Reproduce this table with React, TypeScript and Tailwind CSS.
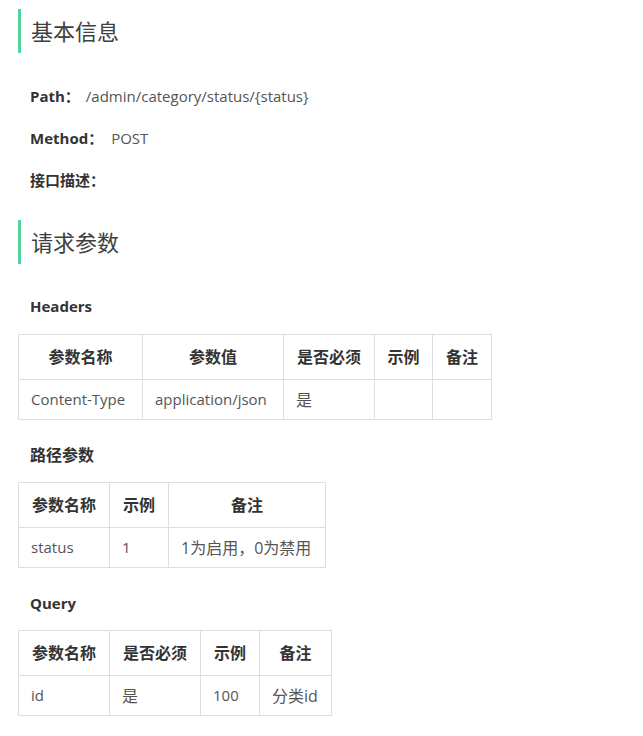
import React from "react";

const FONT = '"Open Sans", "Noto Sans CJK SC", sans-serif';

function Heading({ children, className = "" }: { children: React.ReactNode; className?: string }) {
  return (
    <div className={`ml-[18px] h-[44px] flex items-center border-l-[3px] border-[#54d39c] pl-[10px] text-[22px] text-[#404040] ${className}`}>
      {children}
    </div>
  );
}

function Label({ k, v, vClass = "", className = "" }: { k: string; v?: string; vClass?: string; className?: string }) {
  return (
    <div className={`ml-[30px] h-[24px] flex items-center ${className}`}>
      <span className="font-bold text-[15px] text-[#333]">{k}</span>
      {v && <span className={`text-[15px] text-[#555] ${vClass}`}>{v}</span>}
    </div>
  );
}

function SubTitle({ children, className = "", size = "text-[15px]" }: { children: React.ReactNode; className?: string; size?: string }) {
  return (
    <div className={`ml-[30px] h-[24px] flex items-center font-bold text-[#333] ${size} ${className}`}>
      {children}
    </div>
  );
}

type Cell = { t: string; cjk?: boolean };

function Table({
  widths,
  head,
  rows,
  className = "",
}: {
  widths: number[];
  head: string[];
  rows: Cell[][];
  className?: string;
}) {
  const total = widths.reduce((a, b) => a + b, 0);
  return (
    <table
      className={`ml-[18px] table-fixed border-collapse ${className}`}
      style={{ width: total }}
    >
      <colgroup>
        {widths.map((w, i) => (
          <col key={i} style={{ width: w }} />
        ))}
      </colgroup>
      <thead>
        <tr className="h-[45px]">
          {head.map((h, i) => (
            <th
              key={i}
              className="border border-[#dedede] px-[12px] text-center font-bold text-[16px] text-[#333] whitespace-nowrap"
            >
              {h}
            </th>
          ))}
        </tr>
      </thead>
      <tbody>
        {rows.map((r, ri) => (
          <tr key={ri} className="h-[40px]">
            {r.map((c, ci) => (
              <td
                key={ci}
                className={`border border-[#dedede] px-[12px] text-left text-[#555] whitespace-nowrap ${c.cjk ? "text-[16px]" : "text-[15px]"}`}
              >
                {c.t}
              </td>
            ))}
          </tr>
        ))}
      </tbody>
    </table>
  );
}

export default function App() {
  return (
    <div className="w-[643px] h-[736px] bg-white flex flex-col items-start overflow-hidden" style={{ fontFamily: FONT }}>
      <Heading className="mt-[9px]">基本信息</Heading>
      <Label className="mt-[31px]" k="Path：" v="/admin/category/status/{status}" vClass="ml-[6px]" />
      <Label className="mt-[18px]" k="Method：" v="POST" vClass="ml-[8px]" />
      <Label className="mt-[18px]" k="接口描述：" />
      <Heading className="mt-[28px]">请求参数</Heading>
      <SubTitle className="mt-[30px]">Headers</SubTitle>
      <Table
        className="mt-[16px]"
        widths={[124, 141, 91, 58, 59]}
        head={["参数名称", "参数值", "是否必须", "示例", "备注"]}
        rows={[[{ t: "Content-Type" }, { t: "application/json" }, { t: "是", cjk: true }, { t: "" }, { t: "" }]]}
      />
      <SubTitle className="mt-[23px]" size="text-[16px]">路径参数</SubTitle>
      <Table
        className="mt-[15px]"
        widths={[91, 59, 157]}
        head={["参数名称", "示例", "备注"]}
        rows={[[{ t: "status" }, { t: "1" }, { t: "1为启用，0为禁用", cjk: true }]]}
      />
      <SubTitle className="mt-[23px]">Query</SubTitle>
      <Table
        className="mt-[15px]"
        widths={[91, 91, 59, 72]}
        head={["参数名称", "是否必须", "示例", "备注"]}
        rows={[[{ t: "id" }, { t: "是", cjk: true }, { t: "100" }, { t: "分类id", cjk: true }]]}
      />
    </div>
  );
}
